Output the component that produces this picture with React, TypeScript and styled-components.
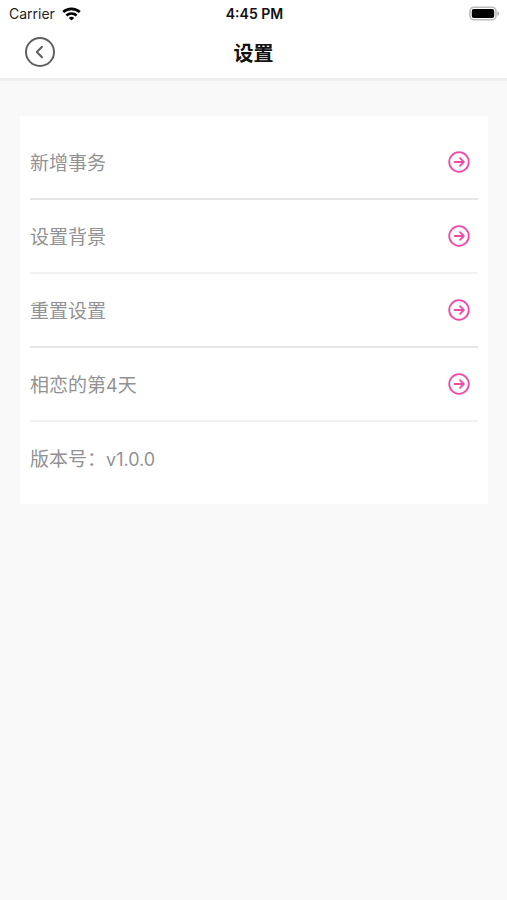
import React from 'react';
import styled, { createGlobalStyle } from 'styled-components';

const GlobalStyle = createGlobalStyle`
  body {
    margin: 0;
    background: #f9f9f9;
    font-family: Inter, "Noto Sans CJK SC", sans-serif;
  }
`;

const Page = styled.div`
  min-height: 100vh;
  background: #f9f9f9;
`;

const Top = styled.header`
  background: #fff;
  border-bottom: 3px solid #eee;
`;

const StatusBar = styled.div`
  display: grid;
  grid-template-columns: 1fr auto 1fr;
  align-items: center;
  height: 27px;
  padding: 0 7px 0 9px;
  font-size: 14px;
  line-height: 20px;
  color: #222;
`;

const Carrier = styled.span`
  display: flex;
  align-items: center;
  gap: 7px;
`;

const Clock = styled.span`
  font-weight: 600;
  color: #111;
`;

const Battery = styled.svg`
  justify-self: end;
`;

const NavBar = styled.div`
  display: grid;
  grid-template-columns: 1fr auto 1fr;
  align-items: center;
  height: 51px;
  padding: 0 24px;
`;

const BackButton = styled.button`
  display: flex;
  justify-self: start;
  padding: 0 0 2px;
  border: 0;
  background: none;
  cursor: pointer;
`;

const Title = styled.h1`
  margin: 0;
  padding-top: 2px;
  font-size: 20px;
  line-height: 30px;
  font-weight: 700;
  color: #111;
`;

const Card = styled.ul`
  margin: 35px 19px 0 20px;
  padding: 10px;
  list-style: none;
  background: #fff;
`;

const Item = styled.li<{ $line?: 'thick' | 'thin' }>`
  box-sizing: border-box;
  height: ${({ $line }) => ($line ? 74 : 72)}px;
  border-bottom: ${({ $line }) =>
    $line === 'thick' ? '2px solid #e6e6e6' : $line === 'thin' ? '2px solid #f2f2f2' : '0'};
`;

const Row = styled.div`
  display: flex;
  align-items: center;
  justify-content: space-between;
  box-sizing: border-box;
  width: 100%;
  height: 72px;
  padding: 0 8px 0 0;
  border: 0;
  background: none;
  font-family: inherit;
  font-size: 19px;
  line-height: 28px;
  font-weight: 400;
  color: #929294;
  text-align: left;
`;

const RowButton = styled(Row).attrs({ as: 'button', type: 'button' })`
  cursor: pointer;
`;

const Label = styled.span`
  padding-top: 4px;
`;

const Latin = styled.span`
  font-size: 18px;
`;

const WifiIcon = () => (
  <svg width="19" height="14" viewBox="0 0 19 14" fill="none" stroke="#000" strokeWidth="2.7" aria-hidden="true">
    <path d="M1.2 5.1C5.8 .7 13.2 .7 17.8 5.1" />
    <path d="M4.4 8.5c2.9-2.7 7.3-2.7 10.2 0" />
    <path d="M9.5 13.6 6.8 10.9c1.5-1.4 3.9-1.4 5.4 0z" fill="#000" stroke="none" />
  </svg>
);

const BatteryIcon = () => (
  <Battery width="31" height="15" viewBox="0 0 31 15" role="img" aria-label="Battery">
    <rect x="1" y="1.2" width="26" height="12.6" rx="4" fill="#fff" stroke="#bcbcbc" strokeWidth="1.6" />
    <rect x="2.8" y="3" width="22.4" height="9" rx="2" fill="#000" />
    <path d="M28.4 5.2v4.6c2.4-.8 2.4-3.8 0-4.6z" fill="#aaa" />
  </Battery>
);

const BackIcon = () => (
  <svg width="32" height="32" viewBox="0 0 32 32" fill="none" stroke="#606060" strokeWidth="2" strokeLinecap="round" strokeLinejoin="round" aria-hidden="true">
    <circle cx="16" cy="16" r="14" />
    <path d="m18 10.8-5.2 5.2 5.2 5.2" />
  </svg>
);

const ArrowIcon = () => (
  <svg width="22" height="22" viewBox="0 0 22 22" fill="none" stroke="#ee4aa8" strokeWidth="1.8" strokeLinecap="round" strokeLinejoin="round" aria-hidden="true">
    <circle cx="11" cy="11" r="9.8" />
    <path d="M6.6 11h9M12 7.2l3.8 3.8-3.8 3.8" />
  </svg>
);

const items: { id: string; label: React.ReactNode; line: 'thick' | 'thin' }[] = [
  { id: 'add', label: '新增事务', line: 'thick' },
  { id: 'background', label: '设置背景', line: 'thin' },
  { id: 'reset', label: '重置设置', line: 'thick' },
  { id: 'days', label: <>相恋的第<Latin>4</Latin>天</>, line: 'thin' },
];

export default function App() {
  return (
    <>
      <GlobalStyle />
      <Page lang="zh-CN">
        <Top>
          <StatusBar>
            <Carrier>
              Carrier
              <WifiIcon />
            </Carrier>
            <Clock>4:45 PM</Clock>
            <BatteryIcon />
          </StatusBar>
          <NavBar>
            <BackButton type="button" aria-label="返回">
              <BackIcon />
            </BackButton>
            <Title>设置</Title>
          </NavBar>
        </Top>
        <main>
          <Card>
            {items.map(({ id, label, line }) => (
              <Item key={id} $line={line}>
                <RowButton>
                  <Label>{label}</Label>
                  <ArrowIcon />
                </RowButton>
              </Item>
            ))}
            <Item>
              <Row>
                <Label>版本号：<Latin>v1.0.0</Latin></Label>
              </Row>
            </Item>
          </Card>
        </main>
      </Page>
    </>
  );
}
